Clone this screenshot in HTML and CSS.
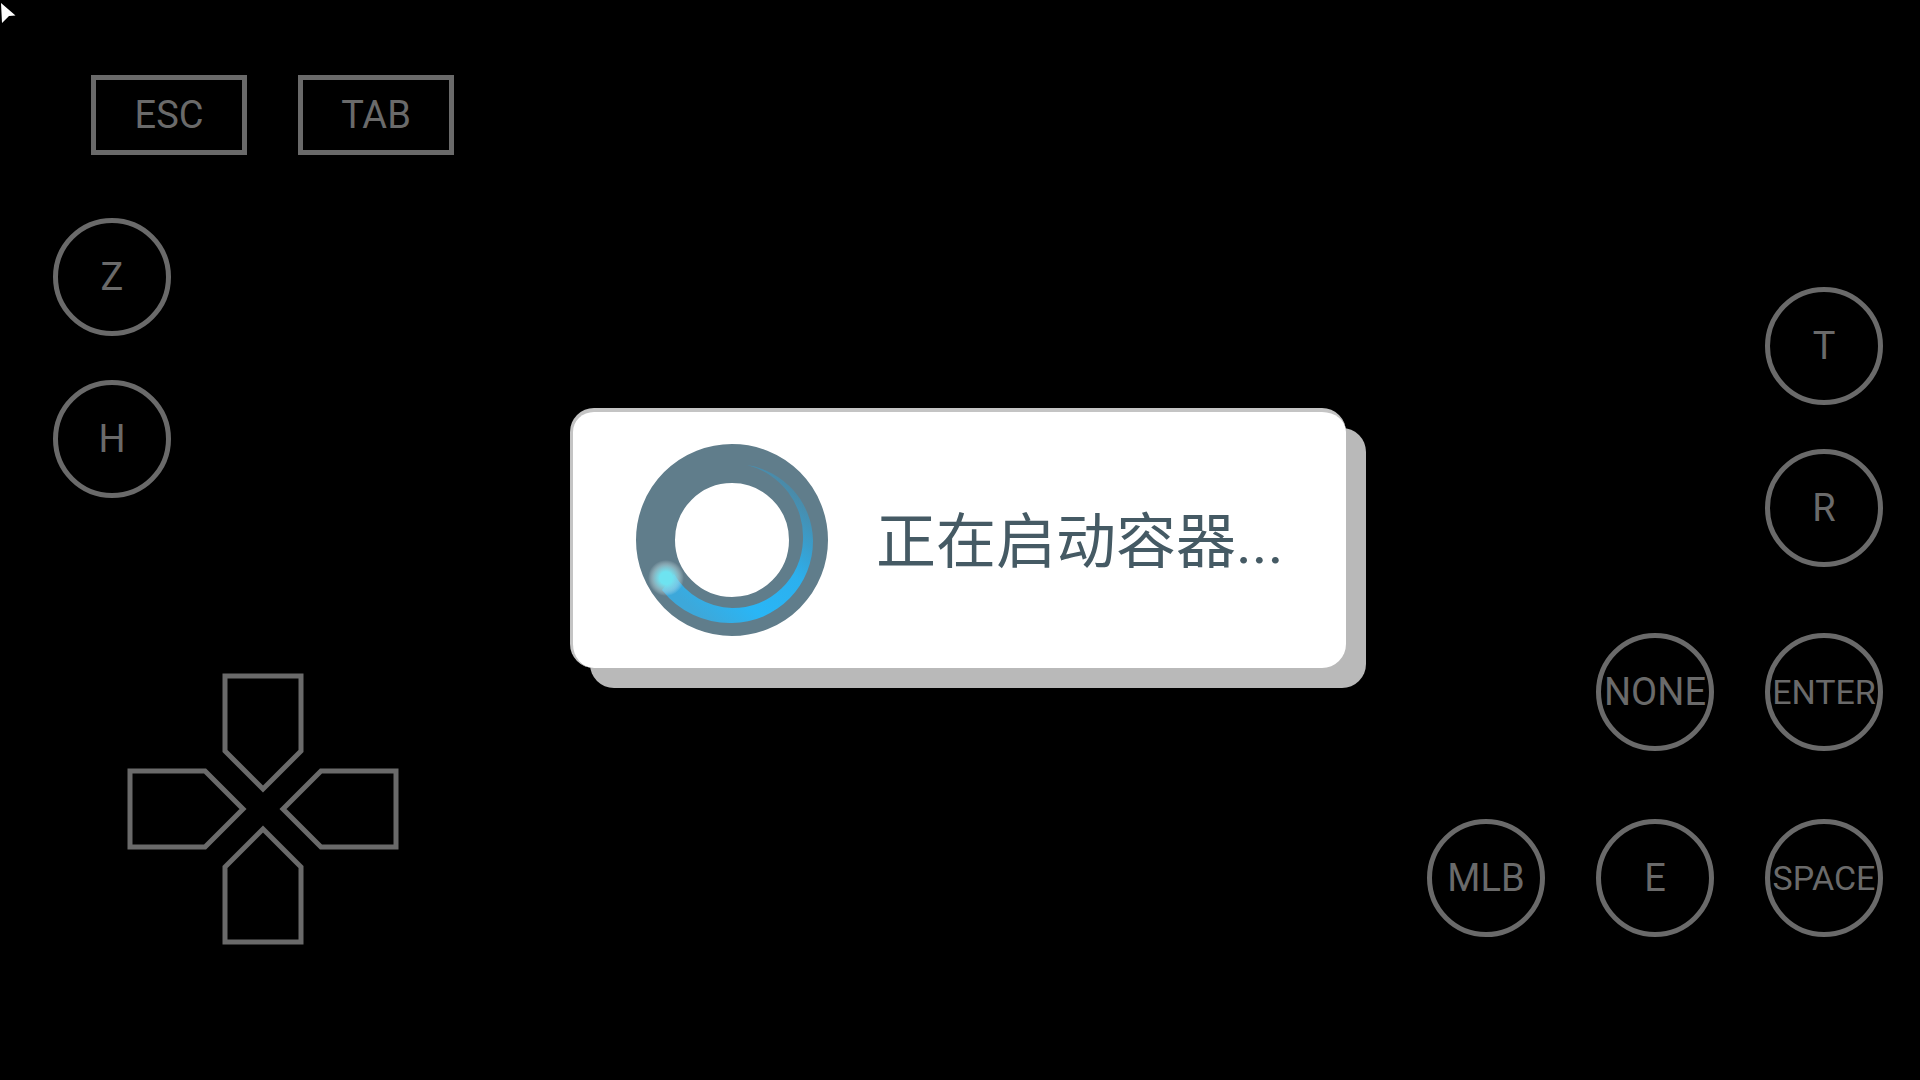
FILE: index.html
```html
<!DOCTYPE html>
<html lang="zh-CN">
<head>
    <meta charset="UTF-8">
    <title>正在启动容器</title>
    <link rel="stylesheet" href="styles.css">
</head>
<body>
    <div class="screen">
        <svg class="cursor" width="20" height="26" viewBox="0 0 20 26">
            <polygon points="1,3 15.5,15.5 9,16 2,23" fill="#fff"/>
        </svg>

        <!-- Top keys -->
        <div class="keys-top">
            <div class="key key-rect">ESC</div>
            <div class="key key-rect">TAB</div>
        </div>

        <!-- Left keys -->
        <div class="keys-left">
            <div class="key key-round">Z</div>
            <div class="key key-round">H</div>
        </div>

        <!-- D-pad -->
        <svg class="dpad" width="272" height="272" viewBox="-136 -136 272 272">
            <polygon points="-38,-133 38,-133 38,-58 0,-20 -38,-58"/>
            <polygon points="133,-38 133,38 58,38 20,0 58,-38"/>
            <polygon points="38,133 -38,133 -38,58 0,20 38,58"/>
            <polygon points="-133,38 -133,-38 -58,-38 -20,0 -58,38"/>
        </svg>

        <!-- Right keys -->
        <div class="keys-right">
            <div class="key-row row-t">
                <div class="key key-round">T</div>
            </div>
            <div class="key-row row-r">
                <div class="key key-round">R</div>
            </div>
            <div class="key-row row-enter">
                <div class="key key-round">NONE</div>
                <div class="key key-round key-small">ENTER</div>
            </div>
            <div class="key-row row-space">
                <div class="key key-round">MLB</div>
                <div class="key key-round">E</div>
                <div class="key key-round key-small">SPACE</div>
            </div>
        </div>

        <!-- Loading dialog -->
        <div class="dialog">
            <svg class="spinner" width="192" height="192" viewBox="636 444 192 192">
                <defs>
                    <linearGradient id="arcFill" gradientUnits="userSpaceOnUse" x1="770" y1="465" x2="665" y2="585">
                        <stop offset="0" stop-color="#4c88a4"/>
                        <stop offset="0.22" stop-color="#3a9dcb"/>
                        <stop offset="0.42" stop-color="#2cb0ee"/>
                        <stop offset="0.75" stop-color="#29b6f6"/>
                        <stop offset="1" stop-color="#3da8da"/>
                    </linearGradient>
                    <radialGradient id="glow">
                        <stop offset="0" stop-color="#6ee3f0"/>
                        <stop offset="0.35" stop-color="#6ee3f0"/>
                        <stop offset="0.6" stop-color="#8fdfeb" stop-opacity="0.7"/>
                        <stop offset="0.8" stop-color="#c4e8ee" stop-opacity="0.35"/>
                        <stop offset="1" stop-color="#dff3f6" stop-opacity="0"/>
                    </radialGradient>
                </defs>
                <circle cx="732" cy="540" r="76.5" fill="none" stroke="#607d8b" stroke-width="39"/>
                <path fill="url(#arcFill)" d="M747 465 A78 78 0 0 1 813 540 A82 82 0 0 1 732 623 A86 86 0 0 1 662 590 L674 574 A69 69 0 0 0 732 608 A70 70 0 0 0 803 540 A74 74 0 0 0 747 465 Z"/>
                <circle cx="666" cy="578" r="18" fill="url(#glow)"/>
            </svg>
            <div class="dialog-text">正在启动容器...</div>
        </div>
    </div>
</body>
</html>
```

FILE: styles.css
```css
html, body {
    margin: 0;
    padding: 0;
    background-color: #000;
}

.screen {
    position: relative;
    width: 1920px;
    height: 1080px;
    overflow: hidden;
    background-color: #000;
    font-family: Roboto, "Noto Sans CJK SC", sans-serif;
}

.cursor {
    position: absolute;
    left: 0;
    top: 0;
}

.keys-top {
    position: absolute;
    left: 91px;
    top: 75px;
    display: flex;
    gap: 51px;
}

.keys-left {
    position: absolute;
    left: 53px;
    top: 218px;
    display: flex;
    flex-direction: column;
    gap: 44px;
}

.keys-right {
    position: absolute;
    right: 37px;
    top: 287px;
    display: flex;
    flex-direction: column;
}

.key-row {
    display: flex;
    justify-content: flex-end;
    gap: 51px;
}

.row-r {
    margin-top: 44px;
}

.row-enter {
    margin-top: 66px;
}

.row-space {
    margin-top: 68px;
}

.key {
    box-sizing: border-box;
    display: flex;
    align-items: center;
    justify-content: center;
    border: 5px solid #6a6a6a;
    color: #6a6a6a;
    font-size: 38px;
    white-space: nowrap;
}

.key-rect {
    width: 156px;
    height: 80px;
}

.key-round {
    width: 118px;
    height: 118px;
    border-radius: 50%;
}

.key-small {
    font-size: 34px;
}

.dpad {
    position: absolute;
    left: 127px;
    top: 673px;
}

.dpad polygon {
    fill: none;
    stroke: #6a6a6a;
    stroke-width: 5;
}

.dialog {
    position: absolute;
    left: 570px;
    top: 408px;
    box-sizing: border-box;
    width: 776px;
    height: 260px;
    display: flex;
    align-items: center;
    gap: 48px;
    padding-left: 63px;
    background-color: #fff;
    border-top: 4px solid #c4c4c4;
    border-left: 3px solid #c4c4c4;
    border-radius: 24px;
    box-shadow: 20px 20px 0 #b9b9b9;
}

.spinner {
    flex-shrink: 0;
}

.dialog-text {
    margin-bottom: 8px;
    color: #455a64;
    font-size: 60px;
    white-space: nowrap;
}
```
